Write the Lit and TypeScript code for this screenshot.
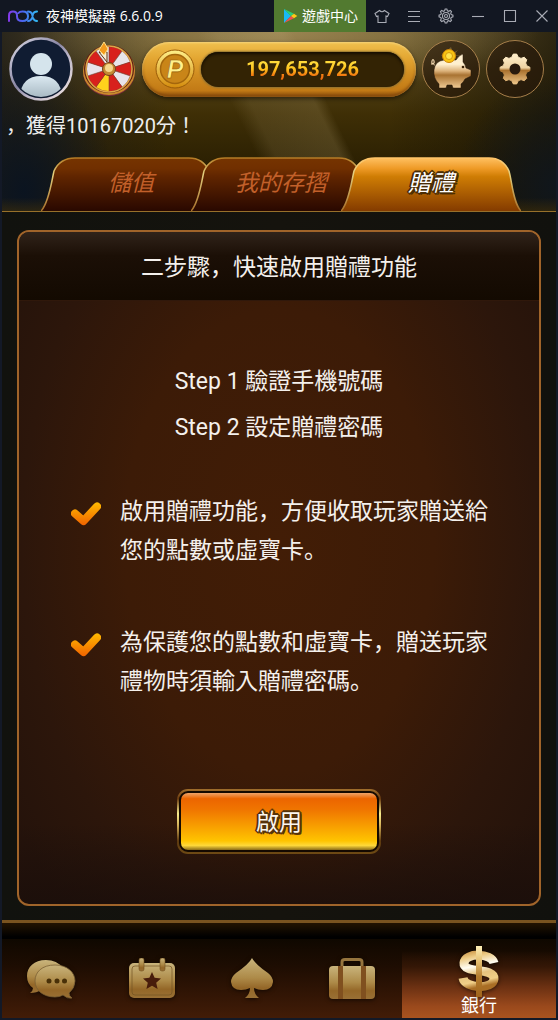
import { LitElement, html, css, svg } from "lit";
import { customElement, state } from "lit/decorators.js";
import { classMap } from "lit/directives/class-map.js";

const wheelSlice = (i: number, r: number) => {
  const a = ((i * 36 - 90) * Math.PI) / 180;
  const b = (((i + 1) * 36 - 90) * Math.PI) / 180;
  const p = (t: number) => `${(Math.cos(t) * r).toFixed(2)} ${(Math.sin(t) * r).toFixed(2)}`;
  return `M0 0L${p(a)}A${r} ${r} 0 0 1 ${p(b)}Z`;
};
const sliceColors = ["#d8201c", "#e8e4ea", "#d8201c", "#e8e4ea", "#d8201c", "#ffd21c", "#d8201c", "#e8e4ea", "#d8201c", "#e8e4ea"];

const gearPath = (teeth: number, outer: number, inner: number) => {
  const pts: string[] = [];
  for (let i = 0; i < teeth; i++) {
    const base = (i / teeth) * Math.PI * 2 - Math.PI / 2;
    const step = (Math.PI * 2) / teeth;
    for (const [o, r] of [[-0.34, inner], [-0.15, outer], [0.15, outer], [0.34, inner]]) {
      const t = base + o * step;
      pts.push(`${(Math.cos(t) * r).toFixed(2)} ${(Math.sin(t) * r).toFixed(2)}`);
    }
  }
  return `M${pts.join("L")}Z`;
};

const goldDefs = (id: string) => svg`
  <defs>
    <linearGradient id=${id} x1="0" y1="0" x2="0" y2="1">
      <stop offset="0" stop-color="#c9b47c" />
      <stop offset=".5" stop-color="#ad8a48" />
      <stop offset=".75" stop-color="#946728" />
      <stop offset="1" stop-color="#997035" />
    </linearGradient>
  </defs>`;

@customElement("title-bar")
export class TitleBar extends LitElement {
  static styles = css`
    :host {
      display: flex;
      align-items: center;
      height: 32px;
      background: #121722;
      color: #fff;
      font: 14px/20px "Open Sans", "Noto Sans CJK TC", sans-serif;
    }
    .logo { width: 32px; height: 14px; margin: 0 7px; }
    .name { flex: 1; white-space: nowrap; font-weight: 400; }
    button, a { font: inherit; color: inherit; border: 0; padding: 0; background: none; }
    .store {
      display: flex;
      align-items: center;
      gap: 4px;
      box-sizing: border-box;
      width: 92px;
      height: 32px;
      padding-left: 9px;
      background: #527a30;
      text-decoration: none;
      white-space: nowrap;
    }
    .tool { width: 32px; height: 32px; display: grid; place-items: center; }
    .tool svg { width: 16px; height: 16px; fill: none; stroke: #a9acb5; stroke-width: 1.1; }
  `;

  render() {
    return html`
      <svg class="logo" viewBox="0 0 32 14" fill="none" stroke-width="2" aria-hidden="true">
        <defs>
          <linearGradient id="nx" gradientUnits="userSpaceOnUse" x1="0" y1="0" x2="32" y2="0">
            <stop offset="0" stop-color="#8a35e8" />
            <stop offset=".5" stop-color="#4a66f0" />
            <stop offset="1" stop-color="#2fc6f4" />
          </linearGradient>
        </defs>
        <g stroke="url(#nx)" stroke-linecap="round">
          <path d="M2 12V6.500Q2 2.500 6 2.500T10 6.500V7.500Q10 12 15.500 12T21 7.200 15.500 2.500Q12.500 2.500 11.500 4" />
          <path d="M21 2.500q3 0 4 2.500l1 4q1 3 4 3M30 2.500q-3 0-4 2.500l-1 4q-1 3-4 3" />
        </g>
      </svg>
      <span class="name">夜神模擬器 6.6.0.9</span>
      <a class="store" href="#store">
        <svg width="15" height="15" viewBox="0 0 15 15" aria-hidden="true">
          <path d="M1 0v14l7-7z" fill="#19b9f5" />
          <path d="M1 0l10 4.800-3 2.200z" fill="#25d07c" />
          <path d="M1 14l10-4.800-3-2.200z" fill="#ef4f4f" />
          <path d="M11 4.800L14.300 7 11 9.200 8 7z" fill="#fdc916" />
        </svg>
        <span>遊戲中心</span>
      </a>
      <button class="tool" aria-label="主題">
        <svg viewBox="0 0 16 16"><path d="M5.500 2.500Q8 5 10.500 2.500L15 5.500 13.500 8.500 12 8V14.500H4V8L2.500 8.500 1 5.500Z" /></svg>
      </button>
      <button class="tool" aria-label="選單">
        <svg viewBox="0 0 16 16"><path d="M2 3.500H14M2 8.500H14M2 13.500H14" /></svg>
      </button>
      <button class="tool" aria-label="設定">
        <svg viewBox="-8 -8 16 16"><path d=${gearPath(8, 7, 5.4)} /><circle r="3.500" /><circle r="1.500" /></svg>
      </button>
      <button class="tool" aria-label="最小化"><svg viewBox="0 0 16 16"><path d="M2 8.500H14" /></svg></button>
      <button class="tool" aria-label="最大化"><svg viewBox="0 0 16 16"><path d="M2.500 2.500H13.500V13.500H2.500Z" /></svg></button>
      <button class="tool" aria-label="關閉"><svg viewBox="0 0 16 16"><path d="M2.500 2.500L13.500 13.500M13.500 2.500L2.500 13.500" /></svg></button>
    `;
  }
}

@customElement("player-bar")
export class PlayerBar extends LitElement {
  static styles = css`
    :host { display: flex; align-items: center; gap: 6px; padding: 5px 12px 0 7px; }
    button { border: 0; padding: 0; background: none; font: inherit; display: block; }
    svg { display: block; }
    .wheel { margin: 0 0 0 3px; }
    .balance {
      flex: 1;
      display: flex;
      align-items: center;
      gap: 6px;
      box-sizing: border-box;
      height: 55px;
      padding: 0 12px 0 13px;
      border-radius: 28px;
      background: linear-gradient(#f0c04e, #e3a632 30%, #d08c20 60%, #c27a16 88%, #8a4e0c);
      box-shadow: inset 0 1px 2px #f6d47a, inset 0 -2px 3px #84490c, 0 2px 4px rgba(0, 0, 0, 0.5);
    }
    .amount {
      flex: 1;
      height: 35px;
      border-radius: 18px;
      background: #332304;
      box-shadow: inset 0 2px 3px #150d00, 0 0 2px 1px #8d7132;
      text-align: center;
      font: 700 20px/34px Roboto, sans-serif;
    }
    .digits {
      background: linear-gradient(#ffd93a 25%, #ffc21c 50%, #f07010 80%);
      -webkit-background-clip: text;
      background-clip: text;
      color: transparent;
    }
    .round {
      box-sizing: border-box;
      width: 58px;
      height: 58px;
      border: 1px solid #a57e4a;
      border-radius: 50%;
      background: rgba(38, 24, 10, 0.6);
      display: grid;
      place-items: center;
    }
  `;

  render() {
    return html`
      <button aria-label="玩家">
        <svg width="64" height="64" viewBox="0 0 64 64">
          <defs>
            <linearGradient id="ring" x1="0" y1="0" x2="1" y2="1">
              <stop offset="0" stop-color="#dedde8" /><stop offset=".45" stop-color="#8885a3" />
              <stop offset=".6" stop-color="#b9b3c6" /><stop offset="1" stop-color="#f6e8e4" />
            </linearGradient>
            <linearGradient id="bust" x1="0" y1="0" x2="0" y2="1">
              <stop offset="0" stop-color="#dbe9f1" /><stop offset="1" stop-color="#a9bac4" />
            </linearGradient>
            <clipPath id="face"><circle cx="32" cy="32" r="28" /></clipPath>
          </defs>
          <circle cx="32" cy="32" r="30.500" fill="#101c32" stroke="url(#ring)" stroke-width="2.500" />
          <g clip-path="url(#face)">
            <circle cx="32" cy="27" r="11" fill="#d5e4ec" />
            <path d="M11 60Q12 39 32 39T53 60Z" fill="url(#bust)" />
          </g>
        </svg>
      </button>
      <button class="wheel" aria-label="幸運輪盤">
        <svg width="54" height="56" viewBox="-27 -29 54 56">
          <ellipse cx="0" cy="2" rx="26" ry="24" fill="#7c2a3c" />
          <ellipse cx="0" cy="1" rx="26" ry="24" fill="#c98a2c" />
          <ellipse cx="0" cy="-1" rx="25" ry="24" fill="#5c1d12" />
          <g transform="translate(0 -1)">
            ${sliceColors.map((c, i) => svg`<path d=${wheelSlice(i, 22.5)} fill=${c} stroke="#8a4030" stroke-width=".6" />`)}
            <circle r="23" fill="none" stroke="#dda648" stroke-width="1.500" />
          </g>
          <circle cy="-1" r="6.500" fill="#c58a34" stroke="#71401a" />
          <circle cy="-2" r="4" fill="#f5d78c" />
          <path d="M-10-18L-2-18L-2-8Z" fill="#f7ecd2" stroke="#5c3510" />
          <path d="M-5-28L-1-21L-5-15L-10-20Z" fill="#f29a1c" stroke="#ffdf86" />
        </svg>
      </button>
      <div class="balance">
        <svg width="40" height="40" viewBox="0 0 40 40" aria-hidden="true">
          <defs>
            <linearGradient id="coin" x1="0" y1="0" x2="0" y2="1">
              <stop offset="0" stop-color="#fff08a" /><stop offset="1" stop-color="#d48b0c" />
            </linearGradient>
          </defs>
          <circle cx="20" cy="20" r="19" fill="url(#coin)" stroke="#9a5c08" />
          <circle cx="20" cy="20" r="14.500" fill="#c98518" stroke="#a4660c" stroke-width="1.500" />
          <text x="20" y="29" text-anchor="middle" fill="#fff08c" stroke="#925806" stroke-width=".6"
            font-family="Liberation Sans" font-weight="700" font-style="italic" font-size="25">P</text>
        </svg>
        <div class="amount"><span class="digits">197,653,726</span></div>
      </div>
      <button class="round" aria-label="撲滿">
        <svg width="44" height="46" viewBox="0 0 44 46">
          <defs>
            <linearGradient id="pig" x1="0" y1="0" x2="0" y2="1">
              <stop offset=".3" stop-color="#fff0cf" /><stop offset=".5" stop-color="#dcb27a" />
              <stop offset=".62" stop-color="#a97332" /><stop offset="1" stop-color="#f0cb94" />
            </linearGradient>
          </defs>
          <path d="M5 24Q6 15 15 14H27Q30 9 34 8L34 16Q36 18 37 22L42 24V30L36 33Q34 37 32 38V42H24L23 39H18L17 42H10V38Q4 32 5 24Z"
            fill="url(#pig)" stroke="#251506" stroke-width=".5" />
          <path d="M6 19Q2 18 3 15T5 15T2 18" fill="none" stroke="#f0d5ac" stroke-width="1.200" />
          <circle cx="34" cy="21" r="1.300" fill="#392208" />
          <path d="M22 1L24 7L29 4L25 9L32 10L12 10Z" fill="#c5a659" opacity=".4" />
          <circle cx="20" cy="10" r="6.500" fill="#f8c413" stroke="#ce8508" />
          <circle cx="20" cy="10" r="3.500" fill="#ffe34c" stroke="#d79b0b" />
        </svg>
      </button>
      <button class="round" aria-label="設定">
        <svg width="34" height="34" viewBox="-17 -17 34 34">
          <defs>
            <linearGradient id="cog" x1="0" y1="0" x2="0" y2="1">
              <stop offset=".1" stop-color="#fdebc6" /><stop offset=".46" stop-color="#eed2a2" />
              <stop offset=".55" stop-color="#a9712e" /><stop offset="1" stop-color="#ecc488" />
            </linearGradient>
          </defs>
          <path d=${gearPath(8, 15, 12.2)} fill="url(#cog)" stroke="url(#cog)" stroke-width="1" stroke-linejoin="round" />
          <circle r="5.500" fill="#281a0e" />
        </svg>
      </button>
    `;
  }
}

@customElement("bank-tabs")
export class BankTabs extends LitElement {
  static styles = css`
    :host { display: flex; padding: 0 35px 0 39px; border-bottom: 1px solid #97702a; }
    .tab {
      position: relative;
      flex: 1;
      height: 54px;
      margin: 0 0 0 -30px;
      padding: 0;
      border: 0;
      background: none;
      color: #c2602a;
      font: italic 23px/54px Roboto, "Noto Sans CJK JP", sans-serif;
    }
    .tab:first-child { margin-left: 0; }
    .tab.active {
      color: #fff;
      line-height: 50px;
    }
    .shape { position: absolute; inset: 0; width: 100%; height: 100%; }
    .label { position: relative; }
    .active .label {
      text-shadow: 2px 0 #4a2c04, -2px 0 #4a2c04, 0 2px #4a2c04, 0 -2px #4a2c04,
        2px 2px #4a2c04, -1px 1px #4a2c04, 1px -1px #4a2c04, -1px -1px #4a2c04;
    }
  `;

  @state() private current = 2;

  render() {
    return ["儲值", "我的存摺", "贈禮"].map((label, i) => {
      const on = i === this.current;
      return html`
        <button class=${classMap({ tab: true, active: on })} aria-pressed=${on} @click=${() => (this.current = i)}>
          <svg class="shape" viewBox="0 0 180 54" preserveAspectRatio="none" aria-hidden="true">
            <defs>
              <linearGradient id="fill${i}" x1="0" y1="0" x2="0" y2="1">
                <stop offset="0" stop-color=${on ? "#ffc060" : "#763400"} />
                <stop offset=".2" stop-color=${on ? "#ee9a26" : "#702f00"} />
                <stop offset=".35" stop-color=${on ? "#cf7d04" : "#602500"} />
                <stop offset="1" stop-color=${on ? "#843b00" : "#290800"} />
              </linearGradient>
              <linearGradient id="edge${i}" x1="0" y1="0" x2="0" y2="1">
                <stop offset="0" stop-color=${on ? "#ffc468" : "#b47a24"} />
                <stop offset=".3" stop-color="#e4d080" />
                <stop offset="1" stop-color="#a8702a" />
              </linearGradient>
            </defs>
            <path d="M0 54C8 46 11 22 13 14Q19 1 34 1H148Q162 1 168 14C171 24 172 46 180 54"
              fill="url(#fill${i})" stroke="url(#edge${i})" stroke-width="1.500" />
          </svg>
          <span class="label">${label}</span>
        </button>`;
    });
  }
}

@customElement("gift-panel")
export class GiftPanel extends LitElement {
  static styles = css`
    :host {
      flex: 1;
      display: flex;
      flex-direction: column;
      margin: 18px 15px 14px;
      border: 2px solid #a0642a;
      border-radius: 12px;
      overflow: hidden;
      color: #f4f0ec;
      font: 23px/39px Roboto, "Noto Sans CJK JP", sans-serif;
      background:
        linear-gradient(transparent 88%, rgba(24, 13, 10, 0.7)),
        radial-gradient(ellipse 62% 72% at 50% 46%, #421d06, #3c1b07 48%, #2c160b 80%, #25130b);
    }
    h1 {
      margin: 0;
      height: 68px;
      text-align: center;
      font: inherit;
      line-height: 72px;
      background: linear-gradient(#30231a, #1b0f06 35%, #130a01);
      border-bottom: 1px solid #30180b;
    }
    ol, ul { list-style: none; margin: 0; padding: 0; }
    .steps { padding-top: 58px; line-height: 46px; text-align: center; }
    .notes {
      display: grid;
      gap: 53px;
      padding: 39px 34px 0 52px;
      font-family: "Noto Sans CJK JP", sans-serif;
    }
    .notes li { display: flex; gap: 19px; }
    .notes svg { flex: none; margin-top: 12px; }
    .notes p { margin: 0; }
    .enable {
      align-self: center;
      box-sizing: border-box;
      width: 204px;
      height: 65px;
      margin: auto 0 50px;
      padding: 2px;
      border: 0;
      border-radius: 11px;
      background: linear-gradient(#a06e2c, #6a3b10 15%, #f8ec8c 38%, #d8b45a 55%, #5e3a10 80%, #6e4a14);
      color: #fbf6ee;
      font: inherit;
    }
    .face {
      display: block;
      box-sizing: border-box;
      height: 100%;
      border: 2px solid #140900;
      border-radius: 9px;
      line-height: 59px;
      background: linear-gradient(#f0a468, #ec6500 10%, #f07400 28%, #f79a00 55%, #ffc400 84%, #ffd93a 92%, #8a6b18);
      text-shadow: 2px 0 #56320a, -2px 0 #56320a, 0 2px #56320a, 0 -2px #56320a,
        2px 2px #56320a, -1px 1px #56320a, 1px -1px #56320a, -1px -1px #56320a;
    }
  `;

  private tick() {
    return html`
      <svg width="30" height="25" viewBox="0 0 30 25" aria-hidden="true">
        <defs>
          <linearGradient id="t" gradientUnits="userSpaceOnUse" x1="0" y1="1" x2="0" y2="24">
            <stop offset="0" stop-color="#ffb800" /><stop offset="1" stop-color="#f06000" />
          </linearGradient>
        </defs>
        <path d="M4 11.500L12.500 19L26 4.500" fill="none" stroke="url(#t)" stroke-width="8" stroke-linecap="round" stroke-linejoin="round" />
      </svg>`;
  }

  render() {
    return html`
      <h1>二步驟，快速啟用贈禮功能</h1>
      <ol class="steps">
        <li>Step 1 驗證手機號碼</li>
        <li>Step 2 設定贈禮密碼</li>
      </ol>
      <ul class="notes">
        <li>${this.tick()}<p>啟用贈禮功能，方便收取玩家贈送給您的點數或虛寶卡。</p></li>
        <li>${this.tick()}<p>為保護您的點數和虛寶卡，贈送玩家禮物時須輸入贈禮密碼。</p></li>
      </ul>
      <button class="enable"><span class="face">啟用</span></button>
    `;
  }
}

@customElement("bottom-nav")
export class BottomNav extends LitElement {
  static styles = css`
    :host { display: block; border-top: 3px solid #79531f; }
    .band { height: 16px; background: linear-gradient(#221300, #000 85%); }
    nav {
      display: grid;
      grid-template-columns: repeat(4, 100fr) 154fr;
      height: 79px;
      background: linear-gradient(#0f0800, #1e0d02 35%, #421c07);
    }
    a { display: grid; place-items: center; text-decoration: none; }
    svg { display: block; filter: drop-shadow(0 1px 2px rgba(0, 0, 0, 0.6)); }
    .current {
      grid-template-rows: 57px 20px;
      align-content: start;
      color: #fff;
      font: 18px/20px Roboto, "Noto Sans CJK JP", sans-serif;
      background: linear-gradient(transparent 15%, #341706 35%, #6a3012 60%, #9a491c 85%, #a9531f);
    }
    .current svg { margin-top: 8px; }
  `;

  render() {
    return html`
      <div class="band"></div>
      <nav>
        <a href="#chat" aria-label="聊天">
          <svg width="52" height="40" viewBox="0 0 52 40">
            ${goldDefs("g")}
            <path d="M20 1C8 1 1 8 1 17Q1 25 7 29Q7 32 4 34Q11 34 15 31L32 20L37 9Q31 1 20 1Z" fill="url(#g)" />
            <path d="M29 6C16 6 9 13 9 22S17 38 29 38Q34 38 37 36Q41 40 46 39Q43 37 43 34Q49 29 49 22C49 13 41 6 29 6Z" fill="url(#g)" stroke="#7a5f33" stroke-width=".8" />
            <circle cx="23" cy="22" r="2.500" fill="#493008" /><circle cx="31" cy="22" r="2.500" fill="#493008" /><circle cx="38.500" cy="22" r="2.500" fill="#493008" />
          </svg>
        </a>
        <a href="#events" aria-label="活動">
          <svg width="46" height="41" viewBox="0 0 46 41">
            ${goldDefs("g")}
            <rect y="5" width="46" height="35" rx="5" fill="url(#g)" />
            <rect x="3" y="8" width="40" height="29" rx="3" fill="none" stroke="#735322" opacity=".7" />
            <rect x="10" y="0" width="5" height="13" rx="2" fill="url(#g)" stroke="#725020" stroke-width=".6" />
            <rect x="31" y="0" width="5" height="13" rx="2" fill="url(#g)" stroke="#725020" stroke-width=".6" />
            <path d="M23 14L25.600 19.800 32 20.500 27.200 24.700 28.600 31 23 27.700 17.400 31 18.800 24.700 14 20.500 20.400 19.800Z" fill="#481c0b" />
          </svg>
        </a>
        <a href="#games" aria-label="遊戲">
          <svg width="44" height="41" viewBox="0 0 44 41">
            ${goldDefs("g")}
            <path d="M22 0Q25 6 38 15Q43 19 43 24Q42 32 33 32Q28 32 24 30Q24 36 29 40H15Q20 36 20 30Q16 32 11 32Q2 32 1 24Q1 19 6 15Q19 6 22 0Z" fill="url(#g)" />
          </svg>
        </a>
        <a href="#bag" aria-label="背包">
          <svg width="46" height="41" viewBox="0 0 46 41">
            ${goldDefs("g")}
            <path d="M13 9V4Q13 1.500 16 1.500H30Q33 1.500 33 4V9" fill="none" stroke="#96753e" stroke-width="3" />
            <rect y="8" width="46" height="33" rx="4" fill="url(#g)" />
            <path d="M9 8H14V41H9ZM32 8H37V41H32Z" fill="#80501f" />
          </svg>
        </a>
        <a class="current" href="#bank" aria-current="page">
          <svg width="44" height="52" viewBox="0 0 44 52" aria-hidden="true">
            <defs>
              <linearGradient id="s" gradientUnits="userSpaceOnUse" x1="0" y1="6" x2="8" y2="44">
                <stop offset="0" stop-color="#c68c3c" /><stop offset=".2" stop-color="#ecc982" />
                <stop offset=".45" stop-color="#fffdf2" /><stop offset=".65" stop-color="#e6c37e" />
                <stop offset=".85" stop-color="#f0cf88" /><stop offset="1" stop-color="#a96e25" />
              </linearGradient>
              <linearGradient id="bar" x1="0" y1="0" x2="0" y2="1">
                <stop offset="0" stop-color="#fff0b8" /><stop offset=".3" stop-color="#e5bf72" />
                <stop offset=".6" stop-color="#b47c2e" /><stop offset="1" stop-color="#a0651c" />
              </linearGradient>
            </defs>
            <path d="M37 17C35 7 8 6 7 17C6 28 38 21 37 33C36 44 8 43 6 32" fill="none" stroke="url(#s)" stroke-width="9" />
            <rect x="19" y="0" width="6" height="51" fill="url(#bar)" />
          </svg>
          <span>銀行</span>
        </a>
      </nav>
    `;
  }
}

@customElement("app-root")
export class AppRoot extends LitElement {
  static styles = css`
    :host {
      display: flex;
      flex-direction: column;
      min-height: 100vh;
      background: #131927;
    }
    main {
      flex: 1;
      display: flex;
      flex-direction: column;
      margin: 0 2px 2px;
      background: linear-gradient(90deg, #11120e, #15130d 50%, #11110d);
    }
    header {
      background:
        linear-gradient(transparent 92%, rgba(90, 62, 0, 0.4)),
        linear-gradient(64deg, transparent 44%, rgba(180, 160, 110, 0.16) 47%, rgba(180, 160, 110, 0.22) 57%, transparent 59%),
        radial-gradient(ellipse 260px 60px at 50% 0, rgba(170, 148, 94, 0.75), transparent),
        radial-gradient(ellipse 90px 130px at 4% 88%, #0b1420, transparent),
        radial-gradient(ellipse 100px 110px at 100% 85%, #10161c, transparent),
        linear-gradient(90deg, rgba(26, 26, 24, 0.8), transparent 30%, transparent 70%, rgba(20, 17, 6, 0.7)),
        linear-gradient(#6b592c, #3f2f06 45%, #2a1f02 75%, #1f1702);
    }
    .news {
      margin: 0;
      padding: 10px 4px 16px;
      color: #eee;
      font: 20px/30px Roboto, "Noto Sans CJK JP", sans-serif;
    }
  `;

  render() {
    return html`
      <title-bar></title-bar>
      <main>
        <header>
          <player-bar></player-bar>
          <p class="news">，獲得10167020分！</p>
          <bank-tabs></bank-tabs>
        </header>
        <gift-panel></gift-panel>
        <bottom-nav></bottom-nav>
      </main>
    `;
  }
}
